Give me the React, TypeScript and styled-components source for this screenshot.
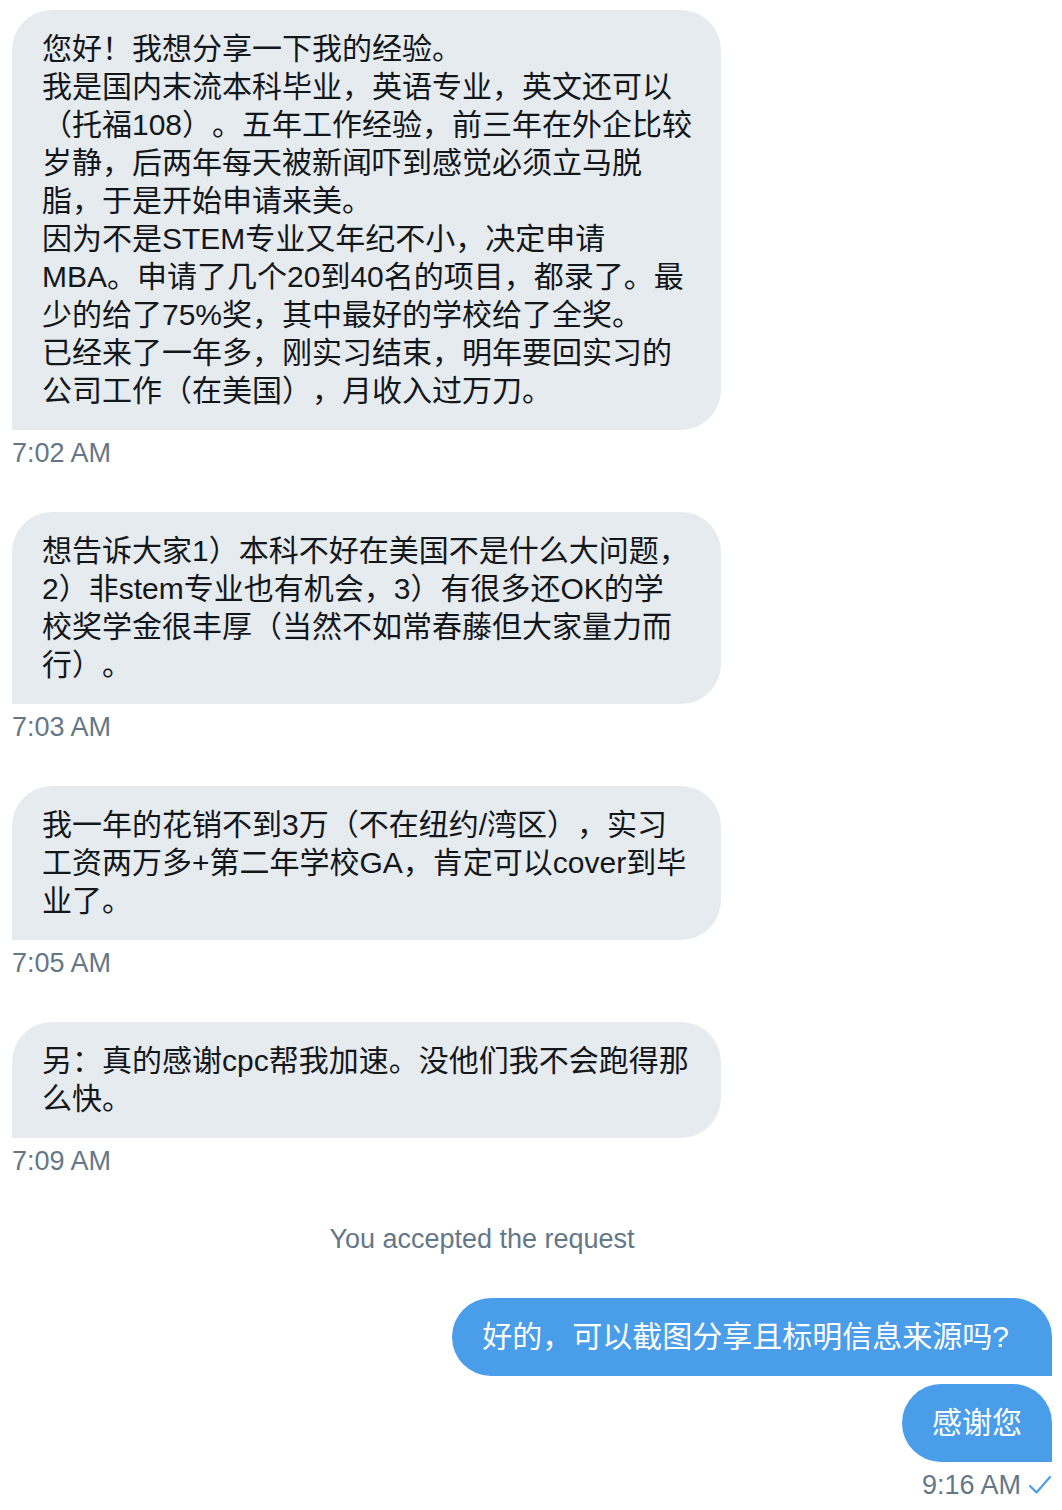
import React from "react";
import styled, { createGlobalStyle } from "styled-components";

const GlobalStyle = createGlobalStyle`
  html, body {
    margin: 0;
    padding: 0;
    background: #ffffff;
  }
  body {
    font-family: "Liberation Sans", "Noto Sans CJK SC", sans-serif;
    -webkit-font-smoothing: antialiased;
    text-spacing-trim: space-all;
  }
`;

const Page = styled.div`
  width: 1062px;
  min-height: 1510px;
  box-sizing: border-box;
  padding: 10px 10px 0 12px;
  display: flex;
  flex-direction: column;
  background: #ffffff;
`;

const ReceivedGroup = styled.div`
  display: flex;
  flex-direction: column;
  align-items: flex-start;
  margin-bottom: 44px;
`;

const SentGroup = styled.div`
  display: flex;
  flex-direction: column;
  align-items: flex-end;
  gap: 8px;
  margin-top: 44px;
`;

const Bubble = styled.div<{ $sent?: boolean; $padRight?: number }>`
  box-sizing: border-box;
  padding: 20px ${(p) => p.$padRight ?? 30}px 20px 30px;
  font-size: 30px;
  line-height: 38px;
  color: ${(p) => (p.$sent ? "#ffffff" : "#14171a")};
  background: ${(p) => (p.$sent ? "#4a9de9" : "#e6ebf0")};
  border-radius: ${(p) => (p.$sent ? "40px 40px 0 40px" : "40px 40px 40px 0")};
  width: ${(p) => (p.$sent ? "auto" : "709px")};
  text-spacing-trim: space-all;
`;

const Line = styled.span`
  display: block;
  white-space: nowrap;
`;

const Time = styled.div`
  margin-top: 8px;
  font-size: 27px;
  line-height: 30px;
  color: #657786;
  display: flex;
  align-items: center;
  gap: 7px;
`;

const SentMeta = styled.div`
  display: flex;
  justify-content: flex-end;
`;

const SystemNote = styled.div`
  margin-top: 4px;
  padding-right: 100px;
  text-align: center;
  font-size: 27px;
  line-height: 30px;
  color: #657786;
`;

const Check = () => (
  <svg width="24" height="20" viewBox="0 0 24 20" fill="none">
    <polyline
      points="2,11 8.5,17.5 22,2"
      stroke="#4a9de9"
      strokeWidth="2.2"
      strokeLinecap="round"
      strokeLinejoin="round"
    />
  </svg>
);

type Msg = { lines: string[]; time: string };

const received: Msg[] = [
  {
    lines: [
      "您好！我想分享一下我的经验。",
      "我是国内末流本科毕业，英语专业，英文还可以",
      "（托福108）。五年工作经验，前三年在外企比较",
      "岁静，后两年每天被新闻吓到感觉必须立马脱",
      "脂，于是开始申请来美。",
      "因为不是STEM专业又年纪不小，决定申请",
      "MBA。申请了几个20到40名的项目，都录了。最",
      "少的给了75%奖，其中最好的学校给了全奖。",
      "已经来了一年多，刚实习结束，明年要回实习的",
      "公司工作（在美国），月收入过万刀。",
    ],
    time: "7:02 AM",
  },
  {
    lines: [
      "想告诉大家1）本科不好在美国不是什么大问题，",
      "2）非stem专业也有机会，3）有很多还OK的学",
      "校奖学金很丰厚（当然不如常春藤但大家量力而",
      "行）。",
    ],
    time: "7:03 AM",
  },
  {
    lines: [
      "我一年的花销不到3万（不在纽约/湾区），实习",
      "工资两万多+第二年学校GA，肯定可以cover到毕",
      "业了。",
    ],
    time: "7:05 AM",
  },
  {
    lines: ["另：真的感谢cpc帮我加速。没他们我不会跑得那", "么快。"],
    time: "7:09 AM",
  },
];

export default function App() {
  return (
    <>
      <GlobalStyle />
      <Page>
        {received.map((m) => (
          <ReceivedGroup key={m.time}>
            <Bubble>
              {m.lines.map((l, i) => (
                <Line key={i}>{l}</Line>
              ))}
            </Bubble>
            <Time>{m.time}</Time>
          </ReceivedGroup>
        ))}
        <SystemNote>You accepted the request</SystemNote>
        <SentGroup>
          <Bubble $sent $padRight={43}>
            <Line>好的，可以截图分享且标明信息来源吗?</Line>
          </Bubble>
          <Bubble $sent>
            <Line>感谢您</Line>
          </Bubble>
        </SentGroup>
        <SentMeta>
          <Time>
            <span>9:16 AM</span>
            <Check />
          </Time>
        </SentMeta>
      </Page>
    </>
  );
}
